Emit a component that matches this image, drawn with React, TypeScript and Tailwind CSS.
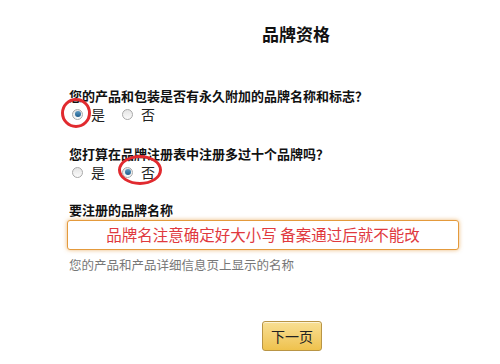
import React from "react";

const font = { fontFamily: '"Noto Sans CJK SC", "Noto Sans", sans-serif' };

function Radio({ checked }: { checked?: boolean }) {
  return (
    <span className="relative inline-flex h-[11px] w-[11px] items-center justify-center rounded-full border border-[#a9a9a9] bg-gradient-to-b from-[#e4e4e4] to-[#fbfbfb]">
      {checked && (
        <span className="h-[6px] w-[6px] rounded-full bg-gradient-to-b from-[#5f9cc4] to-[#1d5d8c]" />
      )}
    </span>
  );
}

function RadioRow({ yes }: { yes: boolean }) {
  return (
    <div className="flex h-[16px] items-center pl-[3px] text-[14px] text-[#222]">
      <span className="flex items-center gap-[8px]">
        <Radio checked={yes} />
        <span>是</span>
      </span>
      <span className="ml-[17px] flex items-center gap-[8px]">
        <Radio checked={!yes} />
        <span>否</span>
      </span>
    </div>
  );
}

export default function App() {
  return (
    <div className="relative h-[364px] w-[500px] overflow-hidden bg-white" style={font}>
      <div className="pl-[92px] pt-[20px] text-center">
        <h1 className="text-[17px] font-bold leading-[28px] text-[#111]">品牌资格</h1>
      </div>

      <div className="pl-[69px] pt-[38px]">
        <p className="text-[13px] font-bold leading-[20px] text-[#111]">
          您的产品和包装是否有永久附加的品牌名称和标志？
        </p>
        <RadioRow yes={true} />

        <p className="mt-[22px] text-[13px] font-bold leading-[20px] text-[#111]">
          您打算在品牌注册表中注册多过十个品牌吗？
        </p>
        <RadioRow yes={false} />

        <p className="mt-[20px] text-[13px] font-bold leading-[20px] text-[#111]">要注册的品牌名称</p>
        <div className="ml-[-2px] flex h-[30px] w-[392px] items-center justify-center rounded-[3px] border border-[#e49a3c] bg-white shadow-[0_0_4px_rgba(228,154,60,0.7)]">
          <span className="text-[15.5px] leading-none text-[#e0393e]">
            品牌名注意确定好大小写 备案通过后就不能改
          </span>
        </div>
        <p className="mt-[6px] text-[12.5px] leading-[18px] text-[#777]">
          您的产品和产品详细信息页上显示的名称
        </p>
      </div>

      <div className="flex justify-center pl-[84px] pt-[47px]">
        <button className="h-[30px] w-[60px] rounded-[3px] border border-[#b99545] bg-gradient-to-b from-[#f8df93] to-[#efc24c] text-[14px] text-[#222] shadow-[inset_0_1px_0_rgba(255,255,255,0.6)]">
          下一页
        </button>
      </div>

      {/* red annotation circles */}
      <div className="absolute left-[61px] top-[98px] h-[30px] w-[30px] rounded-full border-[3px] border-[#e12a2f]" />
      <div className="absolute left-[118px] top-[155px] h-[30px] w-[44px] rounded-[50%] border-[3px] border-[#e12a2f]" />
    </div>
  );
}
